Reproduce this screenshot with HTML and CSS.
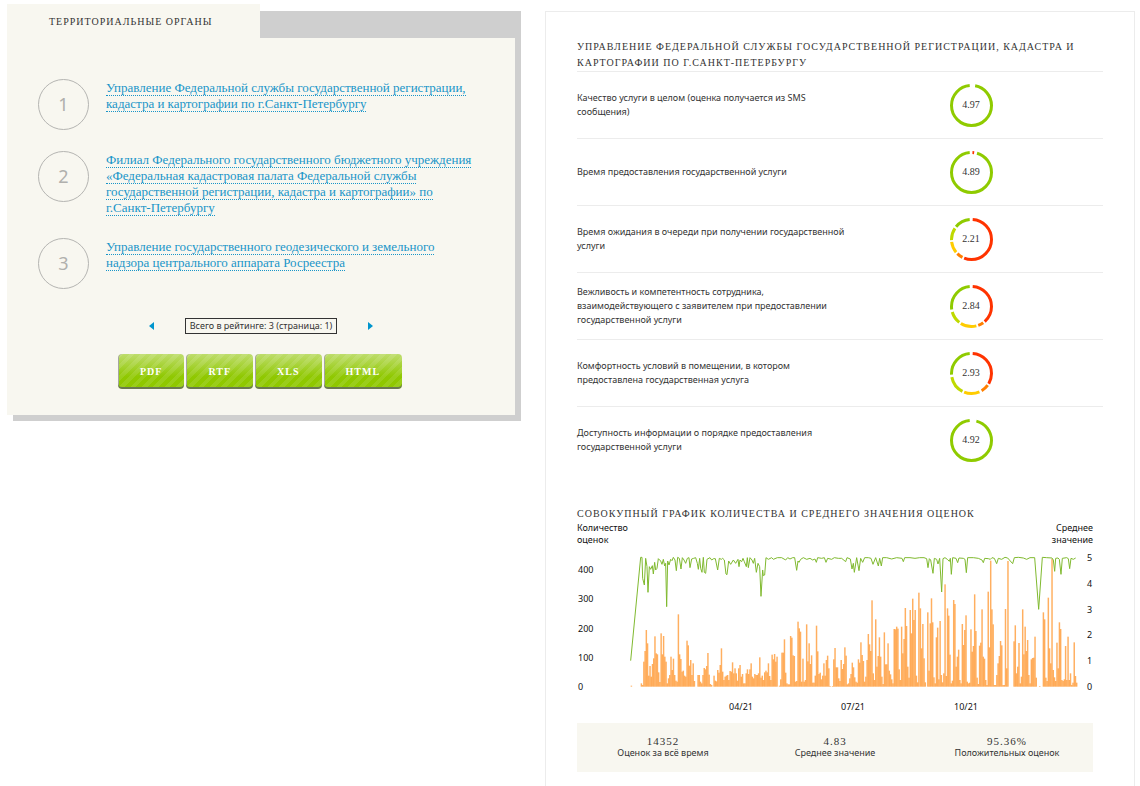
FILE: index.html
```
<!DOCTYPE html>
<html lang="ru">
<head>
<meta charset="utf-8">
<title>Территориальные органы</title>
<link rel="stylesheet" href="styles.css">
</head>
<body>
<main class="page">
  <section class="rating">
    <div class="rating-head">
      <h2 class="tab">Территориальные органы</h2>
      <div class="tab-rest"></div>
    </div>
    <div class="rating-body">
      <ol class="orgs">
        <li class="org"><span class="org-num">1</span><p class="org-name"><a href="#">Управление Федеральной службы государственной регистрации,<br>кадастра и картографии по г.Санкт-Петербургу</a></p></li>
        <li class="org"><span class="org-num">2</span><p class="org-name"><a href="#">Филиал Федерального государственного бюджетного учреждения<br>«Федеральная кадастровая палата Федеральной службы<br>государственной регистрации, кадастра и картографии» по<br>г.Санкт-Петербургу</a></p></li>
        <li class="org"><span class="org-num">3</span><p class="org-name"><a href="#">Управление государственного геодезического и земельного<br>надзора центрального аппарата Росреестра</a></p></li>
      </ol>
      <nav class="pager">
        <button class="arrow" aria-label="Назад"><svg width="5" height="8" viewBox="0 0 5 8"><path d="M5 0v8L0 4z"/></svg></button>
        <span class="pager-info">Всего в рейтинге: 3 (страница: 1)</span>
        <button class="arrow" aria-label="Вперёд"><svg width="5" height="8" viewBox="0 0 5 8"><path d="M0 0v8l5-4z"/></svg></button>
      </nav>
      <div class="exports">
        <button class="export">PDF</button>
        <button class="export">RTF</button>
        <button class="export">XLS</button>
        <button class="export">HTML</button>
      </div>
    </div>
  </section>

  <section class="details">
    <h2 class="title">Управление Федеральной службы государственной регистрации, кадастра и<br>картографии по г.Санкт-Петербургу</h2>
    <ul class="criteria">
      <li class="criterion"><p>Качество услуги в целом (оценка получается из SMS<br>сообщения)</p><div class="score" data-parts="green 3 98.5"><span>4.97</span></div></li>
      <li class="criterion"><p>Время предоставления государственной услуги</p><div class="score" data-parts="red 0.8 2.2,green 4.5 98.5"><span>4.89</span></div></li>
      <li class="criterion"><p>Время ожидания в очереди при получении государственной<br>услуги</p><div class="score" data-parts="red 1 56,orange 57.5 62.5,yellow 64 73,lime 74.5 84.5,green 86 98.5"><span>2.21</span></div></li>
      <li class="criterion"><p>Вежливость и компетентность сотрудника,<br>взаимодействующего с заявителем при предоставлении<br>государственной услуги</p><div class="score" data-parts="red 1 38.5,orange 40 44.5,yellow 46 59,lime 60.5 70.5,green 72.5 98.5"><span>2.84</span></div></li>
      <li class="criterion"><p>Комфортность условий в помещении, в котором<br>предоставлена государственная услуга</p><div class="score" data-parts="red 1 33.5,orange 35 41.5,yellow 43.5 56,lime 57.5 72,green 74 98.5"><span>2.93</span></div></li>
      <li class="criterion"><p>Доступность информации о порядке предоставления<br>государственной услуги</p><div class="score" data-parts="green 4 98.5"><span>4.92</span></div></li>
    </ul>

    <div class="summary">
      <h2 class="title">Совокупный график количества и среднего значения оценок</h2>
      <div class="axis-names"><span>Количество<br>оценок</span><span class="axis-right">Среднее<br>значение</span></div>
      <svg class="chart" viewBox="0 0 516 173">
        <g class="plot" transform="scale(.33333)"></g>
        <g class="labels">
          <text x="1" y="28">400</text><text x="1" y="57">300</text><text x="1" y="87">200</text><text x="1" y="116">100</text><text x="1" y="145">0</text>
          <text x="510" y="16">5</text><text x="510" y="42">4</text><text x="510" y="68">3</text><text x="510" y="93">2</text><text x="510" y="119">1</text><text x="510" y="145">0</text>
          <text x="164" y="165" text-anchor="middle">04/21</text><text x="276" y="165" text-anchor="middle">07/21</text><text x="389" y="165" text-anchor="middle">10/21</text>
        </g>
      </svg>
      <dl class="totals">
        <div><dd>14352</dd><dt>Оценок за всё время</dt></div>
        <div><dd>4.83</dd><dt>Среднее значение</dt></div>
        <div><dd>95.36%</dd><dt>Положительных оценок</dt></div>
      </dl>
    </div>
  </section>
</main>
<script src="charts.js"></script>
</body>
</html>
```
FILE: styles.css
```
* { box-sizing: border-box; }
body {
  margin: 0;
  background: #fff;
  color: #333;
  font: 9px/14px "Noto Sans", "Open Sans", sans-serif;
}
h2, p, ol, ul, dl, dd { margin: 0; padding: 0; }
ol, ul { list-style: none; }
button { font: inherit; border: 0; padding: 0; background: none; cursor: pointer; }

.page {
  display: grid;
  grid-template-columns: minmax(0, 508fr) minmax(0, 590fr);
  gap: 30px;
  padding: 4px 5px 0 7px;
  align-items: start;
}

.rating-head { display: flex; align-items: flex-end; }
.tab {
  width: 253px;
  height: 34px;
  padding-left: 42px;
  background: #f8f7f0;
  font: 10px/36px "Liberation Serif", serif;
  letter-spacing: 1px;
  text-transform: uppercase;
}
.tab-rest { flex: 1; height: 27px; background: #cfcfcf; box-shadow: 6px 0 0 #cfcfcf; }
.rating-body {
  padding: 41px 31px 26px;
  background: #f8f7f0;
  box-shadow: 6px 0 0 #cfcfcf, 6px 6px 0 #cfcfcf;
}
.orgs { display: flex; flex-direction: column; gap: 21px; }
.org { display: flex; gap: 17px; align-items: flex-start; }
.org-num {
  flex: none;
  width: 51px;
  height: 51px;
  border: 1px solid #b5b5b2;
  border-radius: 50%;
  color: #b0b0ad;
  font: 18px/49px "Noto Sans", sans-serif;
  text-align: center;
}
.org-name { padding: 1px 0; font: 13px/16px "Liberation Serif", serif; }
.org-name a { color: #1995c8; text-decoration: none; border-bottom: 1px dotted #1995c8; }

.pager { display: flex; justify-content: space-between; align-items: center; width: 224px; margin: 29px auto 0 111px; }
.arrow { display: flex; fill: #0095cd; }
.pager-info { padding: 0 4px; border: 1px solid #333; white-space: nowrap; }

.exports { display: flex; gap: 2px; margin: 20px 0 0 80px; }
.export {
  height: 35px;
  padding: 0 22px;
  border-radius: 4px;
  color: #fff;
  font: bold 10px/35px "Liberation Serif", serif;
  letter-spacing: 1px;
  background:
    repeating-linear-gradient(135deg, rgba(255,255,255,.1) 0 4px, transparent 4px 8px),
    linear-gradient(#bedd6c, #8fc800 65%);
  box-shadow: inset 0 -2px 0 #6b7a50, inset 1px 0 0 #a5a5a0;
}

.details {
  min-height: calc(100vh - 11px);
  margin: 7px 0 0;
  padding: 27px 31px 12px;
  border: 1px solid #ececec;
  border-bottom: 0;
}
.title {
  font: 10px/16px "Liberation Serif", serif;
  letter-spacing: 1px;
  text-transform: uppercase;
  white-space: nowrap;
}
.criterion {
  display: grid;
  grid-template-columns: minmax(0, 1fr) 264px;
  align-items: center;
  height: 67px;
  border-top: 1px solid #ececec;
}
.criterion p { white-space: nowrap; }
.score { display: grid; place-items: center; justify-self: center; }
.score svg, .score span { grid-area: 1 / 1; }
.score span { font: 10px/12px "Liberation Serif", serif; color: #333; }
.red { stroke: #ff3300; }
.orange { stroke: #ff7f00; }
.yellow { stroke: #ffcc00; }
.lime { stroke: #bfd900; }
.green { stroke: #8fcb00; }

.summary { margin: 33px 10px 0 0; }
.axis-names { display: flex; justify-content: space-between; color: #111; line-height: 12px; }
.axis-right { text-align: right; }
.chart { display: block; width: 100%; margin-top: -1px; }
.labels { fill: #111; font-size: 9px; }
.bar { fill: #ff9933; fill-opacity: .78; }
.average { fill: none; stroke: #7fb92e; stroke-width: 3; stroke-linejoin: round; }
.totals {
  display: grid;
  grid-template-columns: repeat(3, 1fr);
  margin-top: 5px;
  padding: 12px 0 13px;
  background: #f8f7f0;
  line-height: 12px;
  text-align: center;
}
.totals > div { display: flex; flex-direction: column; }
.totals dd { font: 11px/12px "Liberation Serif", serif; letter-spacing: 1px; }
```
FILE: charts.js
```
const NS = 'http://www.w3.org/2000/svg';
function add(parent, name, attrs) {
  const el = document.createElementNS(NS, name);
  for (const key in attrs) el.setAttribute(key, attrs[key]);
  parent.appendChild(el);
  return el;
}

// Score rings: each part is "colour from to", in percent clockwise from the top.
document.querySelectorAll('.score').forEach(score => {
  const svg = add(score, 'svg', { width: 43, height: 43, viewBox: '0 0 43 43' });
  score.dataset.parts.split(',').forEach(part => {
    const [colour, from, to] = part.split(' ');
    add(svg, 'circle', {
      class: colour, cx: 21.5, cy: 21.5, r: 20, fill: 'none', 'stroke-width': 3, pathLength: 100,
      'stroke-dasharray': `${to - from} ${100 - (to - from)}`, 'stroke-dashoffset': -from,
      transform: 'rotate(-90 21.5 21.5)'
    });
  });
});

// Daily number of ratings: start of each run of days, then the bar heights.
const STEP = 3.7, BASE = 425;
const runs = [
  [161, [3]],
  [191, [10,5,75,107,170,130,33,62,30,68,85,151,100,97,43,14,160,97,152,90,75,10,25,35,90,50,84,35,18,15,217,97,83,45,48,33,30,138,124,63,80,35,70,17]],
  [361, [35,35,15,10,35,56,52,62,101,36,8,5]],
  [409, [33,18,16,50,42,65,115,45,20,30,33,35,20,47,45,73,40,55,40,18,55]],
  [487, [65,30,38,10,10,40,52,38,52,70,30,25,38,35,35,40,88,27,33,20,43,48,43,70,32,20,96,82,98,75,90,0,3,22,102,102,142,42,10,7,7,152,147,94,92,15,17,195,175,165,15,84,15,20,187,76,130,68,94,12,12,33,183,106,38,42,22,33,70,33,80,93,55,2,0,2,82,116,58,58,25,17,80,53,68,118,93,7,10,25,38,72,58,28,15,12,82,72,133,95,77,15,30,80,158,127,107,259,40,20,202,60,92,148,90,30,8,163,67,67,130,48,37,22,10,173,172,180,174,52,20,180,100,143,236,182,60,27,230,160,264,200,230,33,13,282]],
  [1028, [235,115,188,85,13,0,223,48,190,265,193,28,10,148,177,22,197,35,13,40,307,32,235,213,96,10,18,260,248,60,90,111,20,10,188,125,170,214,15,10,12,172,105,122,277,167,27,8,123,132,232,90,84,20,5,285,118,378,232,187,5,5,35,70,92,137,124,5,5,233,55,377]],
  [1309, [136,184,40,60,131,10,30,232,97,180,107,140,35,10,82,86,87,150,27]],
  [1386, [2]],
  [1397, [223,202,27,17,267,115,70,383,50,28,17,132,55,193,173,20,17,22,122,20,150,20,40,5,12,133,32,12]]
];
const plot = document.querySelector('.plot');
runs.forEach(([start, heights]) => heights.forEach((h, i) => {
  const x = start + i * STEP;
  add(plot, 'rect', { class: 'bar', x: x.toFixed(1), y: BASE - h, width: 4.4, height: h });
}));

// Average rating per day.
add(plot, 'polyline', { class: 'average', points: `
161,347 191,37 195,37 197,100 202,120 206,40 210,65 213,142 217,65 221,73 226,62 229,87 233,52 236,75 240,70 244,41 251,48 255,58 259,43 263,63 266,55 269,185 272,48 276,60 281,43 285,47 289,37 294,45 298,77 302,37 307,40 312,72 316,38 321,45 326,55 331,40 336,38 339,68 344,42 350,40 356,38 361,55 364,73 368,40 371,70 375,82 379,37 382,82 386,85 390,43 399,38 404,45 410,41 415,41 422,75 427,40 433,43 437,40 442,45 447,87 450,89 455,48 461,58 469,45 476,55 483,43 486,65
489,45 494,50 498,40 502,50 508,65 511,38 514,68 519,38 525,45 529,55 533,40 538,82 543,55 548,65 552,154 557,75 559,92 563,90 567,38 574,43 584,38 589,43 601,38 614,38 626,45 632,38 639,42 647,38 653,38 659,76 663,48 666,52 671,43 679,38 689,43 699,40 707,45 714,42 718,52 722,38 734,40 742,38 747,52 752,40 764,43 772,38 784,40 794,40 806,50 810,38 820,42 825,72 829,55 832,82 839,38 846,77 851,40 857,52 863,38 874,38 882,40 888,58 896,38 904,63 908,40 913,63 917,38 929,38 944,42 959,38 975,40 979,50 983,38 999,38 1014,40 1028,38
1041,38 1049,41 1053,68 1057,41 1061,45 1068,85 1072,40 1079,43 1083,57 1088,40 1094,141 1098,41 1104,38 1111,43 1117,49 1120,40 1123,88 1127,38 1137,40 1142,53 1146,39 1159,40 1164,43 1168,83 1172,38 1189,38 1204,40 1215,45 1219,53 1223,40 1234,41 1240,43 1245,38 1252,40 1259,56 1264,40 1274,43 1284,37 1292,39 1307,56 1312,38 1324,37 1339,39 1349,43 1359,38 1373,38 1385,193 1396,37 1409,38 1425,39 1429,45 1433,79 1436,40 1443,39 1447,43 1452,88 1456,40 1469,38 1474,41 1478,71 1482,40 1489,43 1496,39` });
```
